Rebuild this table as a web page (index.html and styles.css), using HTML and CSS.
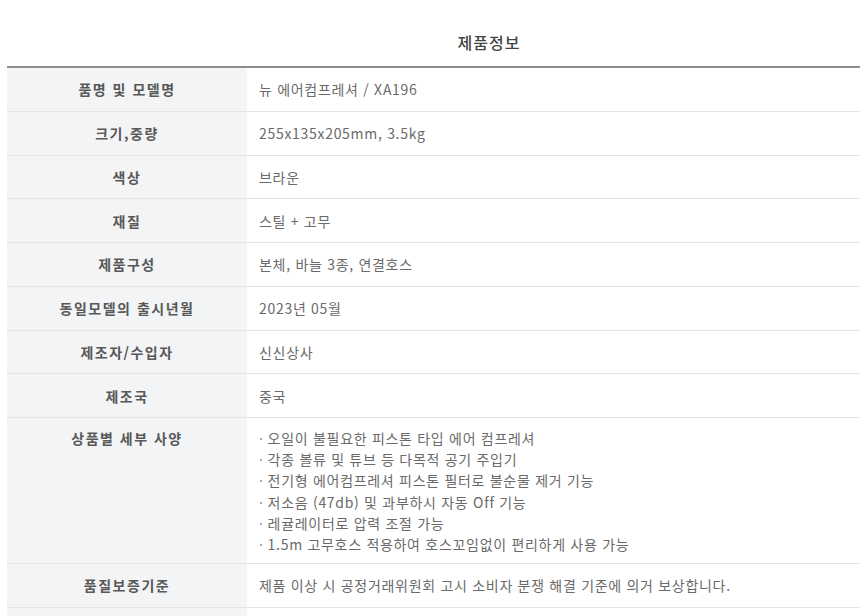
FILE: index.html
```html
<!DOCTYPE html>
<html lang="ko">
<head>
<meta charset="utf-8">
<link rel="stylesheet" href="styles.css">
</head>
<body>
<div class="page">
  <h2 class="title">제품정보</h2>
  <div class="spec">
    <div class="row"><div class="label">품명 및 모델명</div><div class="value">뉴 에어컴프레셔 / XA196</div></div>
    <div class="row"><div class="label">크기,중량</div><div class="value">255x135x205mm, 3.5kg</div></div>
    <div class="row"><div class="label">색상</div><div class="value">브라운</div></div>
    <div class="row"><div class="label">재질</div><div class="value">스틸 + 고무</div></div>
    <div class="row"><div class="label">제품구성</div><div class="value">본체, 바늘 3종, 연결호스</div></div>
    <div class="row"><div class="label">동일모델의 출시년월</div><div class="value">2023년 05월</div></div>
    <div class="row"><div class="label">제조자/수입자</div><div class="value">신신상사</div></div>
    <div class="row"><div class="label">제조국</div><div class="value">중국</div></div>
    <div class="row row-tall">
      <div class="label">상품별 세부 사양</div>
      <div class="value">
        <ul class="bullets">
          <li>오일이 불필요한 피스톤 타입 에어 컴프레셔</li>
          <li>각종 볼류 및 튜브 등 다목적 공기 주입기</li>
          <li>전기형 에어컴프레셔 피스톤 필터로 불순물 제거 기능</li>
          <li>저소음 (47db) 및 과부하시 자동 Off 기능</li>
          <li>레귤레이터로 압력 조절 가능</li>
          <li>1.5m 고무호스 적용하여 호스꼬임없이 편리하게 사용 가능</li>
        </ul>
      </div>
    </div>
    <div class="row"><div class="label">품질보증기준</div><div class="value">제품 이상 시 공정거래위원회 고시 소비자 분쟁 해결 기준에 의거 보상합니다.</div></div>
    <div class="row"><div class="label"></div><div class="value"></div></div>
  </div>
</div>
</body>
</html>
```

FILE: styles.css
```css
html, body {
  margin: 0;
  padding: 0;
  background: #ffffff;
  overflow: hidden;
}

body {
  font-family: "Noto Sans CJK KR", "Noto Sans", sans-serif;
}

.page {
  width: 964px;
  margin-left: 7px;
}

.title {
  margin: 0;
  padding: 32px 0 14px;
  height: 20px;
  font-size: 16px;
  line-height: 20px;
  font-weight: 500;
  color: #444444;
  text-align: center;
  letter-spacing: 1px;
}

.spec {
  border-top: 2px solid #8e8e8e;
}

.row {
  display: grid;
  grid-template-columns: 240px 1fr;
  min-height: 42.75px;
  border-bottom: 1px solid #e4e4e4;
}

.label {
  background: #f3f4f6;
  display: flex;
  align-items: center;
  justify-content: center;
  font-size: 14px;
  font-weight: 700;
  color: #585858;
  letter-spacing: 1.5px;
}

.value {
  display: flex;
  align-items: center;
  padding-left: 12px;
  font-size: 14px;
  color: #6a6a6a;
  font-weight: 400;
  letter-spacing: 0.7px;
}

.row-tall {
  min-height: 145px;
}

.row-tall .label {
  align-items: flex-start;
  padding-top: 10px;
}

.row-tall .value {
  align-items: flex-start;
  padding-top: 10px;
}

.bullets {
  list-style: none;
  margin: 0;
  padding: 0;
}

.bullets li {
  line-height: 21.2px;
}

.bullets li::before {
  content: "·";
  color: #9a9a9a;
  margin-right: 4px;
}
```
